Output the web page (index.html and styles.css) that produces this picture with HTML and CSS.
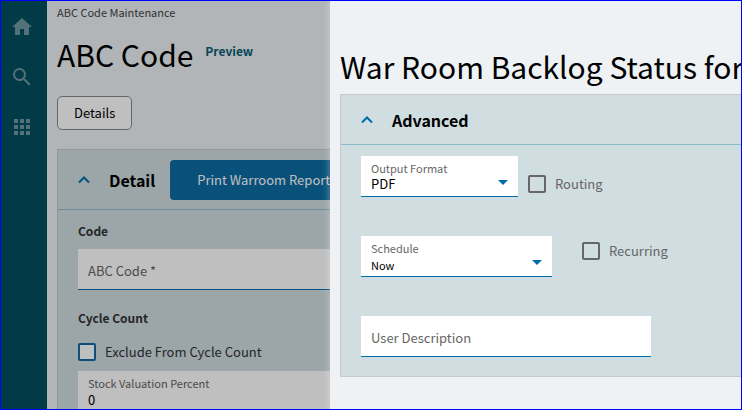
FILE: index.html
```html
<!DOCTYPE html>
<html lang="en">

<head>
  <meta charset="UTF-8">
  <meta name="viewport" content="width=device-width, initial-scale=1.0">
  <title>ABC Code Maintenance</title>
  <link rel="stylesheet" href="styles.css">
</head>

<body>
  <div class="app">
    <nav class="sidebar">
      <a href="#" aria-label="Home">
        <svg viewBox="0 0 24 24"><path d="M10 20v-6h4v6h5v-8h3L12 3 2 12h3v8z"/></svg>
      </a>
      <a href="#" aria-label="Search">
        <svg viewBox="0 0 24 24"><path d="M15.5 14h-.79l-.28-.27A6.47 6.47 0 0 0 16 9.5 6.5 6.5 0 1 0 9.5 16c1.61 0 3.09-.59 4.23-1.57l.27.28v.79l5 4.99L20.49 19l-4.99-5zm-6 0a4.5 4.5 0 1 1 0-9 4.5 4.5 0 0 1 0 9z"/></svg>
      </a>
      <a href="#" aria-label="Apps">
        <svg viewBox="0 0 24 24"><path d="M4 8h4V4H4v4zm6 12h4v-4h-4v4zm-6 0h4v-4H4v4zm0-6h4v-4H4v4zm6 0h4v-4h-4v4zm6-10v4h4V4h-4zm-6 4h4V4h-4v4zm6 6h4v-4h-4v4zm0 6h4v-4h-4v4z"/></svg>
      </a>
    </nav>

    <main class="page">
      <div class="breadcrumb">ABC Code Maintenance</div>
      <div class="page-title">
        <h1>ABC Code</h1>
        <a href="#" class="preview">Preview</a>
      </div>
      <button type="button" class="btn-outline">Details</button>

      <section class="panel">
        <div class="panel-header">
          <svg class="chevron" viewBox="0 0 12 8"><path d="M1 6.5 6 1.5l5 5"/></svg>
          <h2>Detail</h2>
          <button type="button" class="btn-primary">Print Warroom Report</button>
        </div>
        <div class="panel-body">
          <h3>Code</h3>
          <div class="field">
            <input type="text" placeholder="ABC Code *" aria-label="ABC Code">
          </div>
          <h3>Cycle Count</h3>
          <label class="check check-blue"><input type="checkbox"> Exclude From Cycle Count</label>
          <div class="field stock">
            <label for="stock">Stock Valuation Percent</label>
            <input type="text" id="stock" value="0">
          </div>
        </div>
      </section>
    </main>

    <div class="backdrop"></div>

    <aside class="drawer">
      <h1>War Room Backlog Status for</h1>
      <section class="panel">
        <div class="panel-header">
          <svg class="chevron" viewBox="0 0 12 8"><path d="M1 6.5 6 1.5l5 5"/></svg>
          <h2>Advanced</h2>
        </div>
        <div class="panel-body">
          <div class="row">
            <div class="field format">
              <label for="format">Output Format</label>
              <select id="format"><option>PDF</option></select>
              <svg class="caret" viewBox="0 0 10 5"><path d="M0 0h10L5 5z"/></svg>
            </div>
            <label class="check routing"><input type="checkbox"> Routing</label>
          </div>
          <div class="row">
            <div class="field schedule">
              <label for="schedule">Schedule</label>
              <select id="schedule"><option>Now</option></select>
              <svg class="caret" viewBox="0 0 10 5"><path d="M0 0h10L5 5z"/></svg>
            </div>
            <label class="check recurring"><input type="checkbox"> Recurring</label>
          </div>
          <div class="row">
            <div class="field description">
              <input type="text" placeholder="User Description" aria-label="User Description">
            </div>
          </div>
        </div>
      </section>
    </aside>
  </div>
</body>

</html>
```
FILE: styles.css
```css
* {
  box-sizing: border-box;
}

body {
  margin: 0;
  font-family: "Noto Sans CJK SC", "Noto Sans", sans-serif;
  font-size: 13px;
  line-height: 20px;
  color: #000;
  overflow: hidden;
}

input,
select,
button {
  font: inherit;
  color: inherit;
}

h1,
h2,
h3 {
  margin: 0;
}

h1 {
  font-size: 30px;
  line-height: 40px;
  font-weight: 400;
  white-space: nowrap;
}

h2 {
  font-size: 16px;
  font-weight: 700;
}

h3 {
  font-size: 12px;
  font-weight: 700;
  color: #333;
}

.app {
  position: relative;
  display: flex;
  height: 100vh;
  border: 1px solid #0000ff;
  background: #eef2f5;
  overflow: hidden;
}

.sidebar {
  flex: 0 0 46px;
  display: flex;
  flex-direction: column;
  align-items: center;
  gap: 26px;
  padding-top: 14px;
  background: #034f60;
}

.sidebar a {
  height: 24px;
  padding-right: 4px;
}

.sidebar svg {
  display: block;
  width: 24px;
  height: 24px;
  fill: #7196a0;
}

.page {
  flex: 1;
  min-width: 0;
  padding-left: 10px;
}

.breadcrumb {
  padding-top: 1px;
  font-size: 11px;
  color: #444;
}

.page-title {
  display: flex;
  gap: 12px;
  padding-top: 12px;
}

.preview {
  padding-top: 7px;
  font-size: 12px;
  font-weight: 700;
  color: #075f73;
  text-decoration: none;
}

.btn-outline {
  display: block;
  height: 34px;
  margin: 22px 0 19px;
  padding: 0 16px;
  border: 1px solid #888;
  border-radius: 5px;
  background: #fff;
}

.panel {
  border: 1px solid #c8c8c8;
  background: #d0dde1;
}

.panel-header {
  display: flex;
  align-items: center;
  padding: 10px 20px 9px;
  border-bottom: 1px solid #8abccb;
}

.chevron {
  width: 12px;
  height: 8px;
  margin-right: 19px;
  fill: none;
  stroke: #006dab;
  stroke-width: 2;
}

.btn-primary {
  height: 40px;
  margin-left: 15px;
  padding: 0 27px;
  border: 0;
  border-radius: 4px;
  background: #0d6da4;
  color: #fff;
  white-space: nowrap;
}

.panel-body {
  padding: 11px 20px 19px;
}

.page .panel-body .field {
  margin: 8px 0 18px;
}

.page .panel-body .stock {
  margin-top: 9px;
}

.field {
  position: relative;
  height: 41px;
  border-bottom: 1px solid #006dab;
  background: #fff;
}

.field label {
  display: block;
  padding: 4px 10px 0;
  font-size: 11px;
  line-height: 16px;
  color: #666;
}

.field input,
.field select {
  display: block;
  width: 100%;
  height: 100%;
  padding: 3px 10px 0;
  border: 0;
  outline: 0;
  background: transparent;
  appearance: none;
}

.field label + input,
.field label + select {
  height: 16px;
  padding-top: 0;
  line-height: 16px;
}

.field ::placeholder {
  color: #666;
  opacity: 1;
}

.caret {
  position: absolute;
  right: 10px;
  bottom: 11px;
  width: 10px;
  height: 5px;
  fill: #006dab;
}

.check {
  display: flex;
  align-items: center;
  gap: 9px;
  color: #666;
}

.check input {
  width: 18px;
  height: 18px;
  margin: 0;
  border: 2px solid #666;
  border-radius: 2px;
  appearance: none;
}

.check-blue {
  margin-top: 14px;
  color: #333;
}

.check-blue input {
  border-color: #0d6da4;
  background: #fff;
}

.backdrop {
  position: absolute;
  inset: 0;
  background: rgba(0, 0, 0, 0.25);
}

.drawer {
  position: absolute;
  top: 0;
  right: 0;
  bottom: 0;
  left: 329px;
  padding: 45px 0 0 10px;
  background: #eef2f5;
  box-shadow: 0 0 8px rgba(255, 255, 255, 0.4);
  overflow: hidden;
}

.drawer .panel {
  margin-top: 8px;
  border-right: 0;
}

.drawer .panel-header {
  padding: 15px 20px 14px;
}

.row {
  display: flex;
  align-items: flex-start;
  margin-bottom: 39px;
}

.row:last-child {
  margin-bottom: 0;
}

.format {
  width: 157px;
}

.schedule {
  width: 191px;
}

.description {
  width: 290px;
}

.schedule select {
  margin-top: 1px;
  font-size: 11px;
}

.stock input {
  margin-top: 1px;
}

.routing {
  margin: 18px 0 0 10px;
}

.recurring {
  margin: 5px 0 0 30px;
}
```
